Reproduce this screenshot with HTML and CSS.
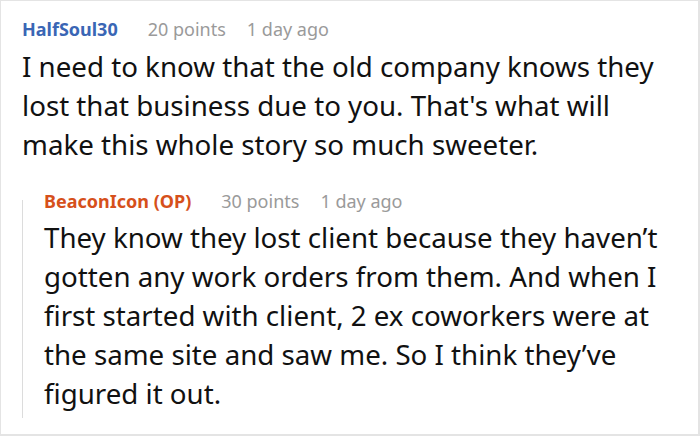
FILE: index.html
```html
<!DOCTYPE html>
<html>
<head>
<meta charset="utf-8">
<link rel="stylesheet" href="styles.css">
</head>
<body>
<div class="frame">
  <div class="comment">
    <div class="meta">
      <span class="user blue">HalfSoul30</span>
      <span class="points">20 points</span>
      <span class="time">1 day ago</span>
    </div>
    <p class="text">I need to know that the old company knows they lost that business due to you. That's what will make this whole story so much sweeter.</p>
    <div class="reply">
      <div class="rail"></div>
      <div class="reply-body">
        <div class="meta">
          <span class="user orange">BeaconIcon (OP)</span>
          <span class="points">30 points</span>
          <span class="time">1 day ago</span>
        </div>
        <p class="text">They know they lost client because they haven’t gotten any work orders from them. And when I first started with client, 2 ex coworkers were at the same site and saw me. So I think they’ve figured it out.</p>
      </div>
    </div>
  </div>
</div>
</body>
</html>
```
FILE: styles.css
```css
html, body {
  margin: 0;
  padding: 0;
  background: #fff;
}
.frame {
  box-sizing: border-box;
  width: 700px;
  height: 436px;
  border: 1px solid #e4e4e4;
  border-right-width: 2px;
  border-bottom-width: 2px;
  overflow: hidden;
  font-family: "Noto Sans", "Open Sans", sans-serif;
  padding: 16px 18px 0 21px;
}
.meta {
  display: flex;
  font-size: 18px;
  line-height: 24px;
  align-items: baseline;
  white-space: nowrap;
}
.user {
  font-weight: bold;
  margin-right: 30px;
}
.points {
  margin-right: 21px;
}
.blue { color: #3a66b5; }
.orange { color: #d6501b; }
.points, .time { color: #9a9a9a; }
.text {
  margin: 6px 0 0;
  font-size: 27.7px;
  line-height: 39px;
  color: #111;
}
.reply {
  display: flex;
  margin-top: 25px;
}
.rail {
  width: 1px;
  flex: none;
  margin-top: 11px;
  background: #dcdcdc;
}
.reply-body {
  flex: 1;
  padding-left: 21px;
  padding-bottom: 5px;
}
.reply .text {
  margin-top: 5px;
}
```
